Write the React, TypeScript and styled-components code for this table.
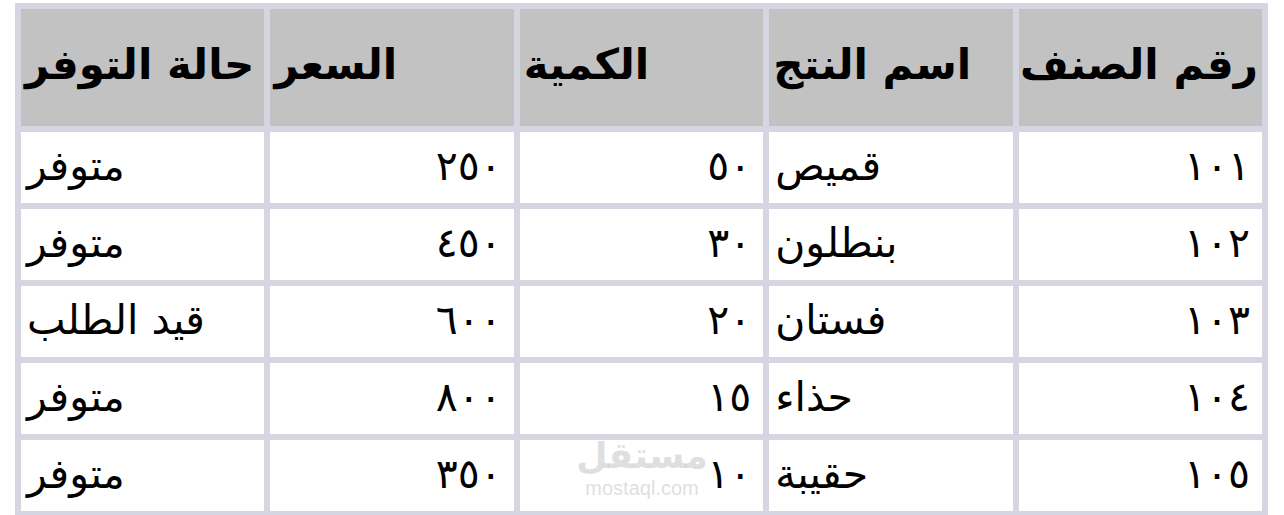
import React from 'react';
import styled, { createGlobalStyle } from 'styled-components';

// ─── Tokens ───────────────────────────────────────────────────────────────────
const C = {
  grid:   '#d6d6e2',
  head:   '#c2c2c2',
  cell:   '#ffffff',
  ink:    '#000000',
  mark:   'rgba(195, 195, 195, 0.55)',
};

const FONT = `"DejaVu Sans", "Noto Sans", sans-serif`;

const GlobalStyle = createGlobalStyle`
  * { box-sizing: border-box; }
  html, body { margin: 0; padding: 0; background: #ffffff; }
  body { font-family: ${FONT}; color: ${C.ink}; }
`;

// ─── Layout ───────────────────────────────────────────────────────────────────
const Page = styled.div`
  position: relative;
  width: 1284px;
  height: 515px;
  padding: 3px 16px 0 15px;
  overflow: hidden;
`;

const Table = styled.table`
  direction: rtl;
  width: 1253px;
  table-layout: fixed;
  border-collapse: separate;
  border-spacing: 6px;
  background: ${C.grid};
`;

const HeadCell = styled.th`
  height: 117px;
  padding: 0 4px 6px;
  background: ${C.head};
  font-family: ${FONT};
  font-weight: bold;
  font-size: 42px;
  text-align: left;
  white-space: nowrap;
  vertical-align: middle;
  overflow: hidden;
`;

const Cell = styled.td<{ $num?: boolean }>`
  height: 71px;
  padding: ${p => (p.$num ? '0 12px 4px 6px' : '0 6px 4px 6px')};
  background: ${C.cell};
  font-family: ${FONT};
  font-size: 41px;
  text-align: ${p => (p.$num ? 'right' : 'left')};
  white-space: nowrap;
  vertical-align: middle;
`;

// ─── Watermark ────────────────────────────────────────────────────────────────
const Watermark = styled.div`
  position: absolute;
  left: 576px;
  top: 438px;
  width: 132px;
  display: flex;
  flex-direction: column;
  align-items: center;
  pointer-events: none;
  color: ${C.mark};
  font-family: ${FONT};
  line-height: 1;
`;

const MarkLogo = styled.span`
  font-size: 36px;
  font-weight: bold;
  direction: rtl;
`;

const MarkUrl = styled.span`
  margin-top: 4px;
  font-family: "Liberation Sans", Arial, sans-serif;
  font-size: 20px;
`;

// ─── Data ─────────────────────────────────────────────────────────────────────
const headers = ['رقم الصنف', 'اسم النتج', 'الكمية', 'السعر', 'حالة التوفر'];

const rows = [
  ['١٠١', 'قميص', '٥٠', '٢٥٠', 'متوفر'],
  ['١٠٢', 'بنطلون', '٣٠', '٤٥٠', 'متوفر'],
  ['١٠٣', 'فستان', '٢٠', '٦٠٠', 'قيد الطلب'],
  ['١٠٤', 'حذاء', '١٥', '٨٠٠', 'متوفر'],
  ['١٠٥', 'حقيبة', '١٠', '٣٥٠', 'متوفر'],
];

const numericCols = [true, false, true, true, false];

export default function App() {
  return (
    <>
      <GlobalStyle />
      <Page>
        <Table>
          <thead>
            <tr>
              {headers.map(h => (
                <HeadCell key={h}>{h}</HeadCell>
              ))}
            </tr>
          </thead>
          <tbody>
            {rows.map(r => (
              <tr key={r[0]}>
                {r.map((v, i) => (
                  <Cell key={i} $num={numericCols[i]}>{v}</Cell>
                ))}
              </tr>
            ))}
          </tbody>
        </Table>

        <Watermark>
          <MarkLogo>مستقل</MarkLogo>
          <MarkUrl>mostaql.com</MarkUrl>
        </Watermark>
      </Page>
    </>
  );
}
